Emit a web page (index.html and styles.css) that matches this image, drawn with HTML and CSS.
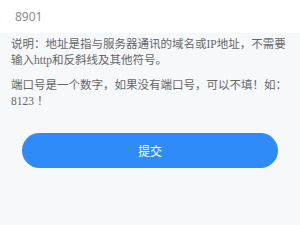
FILE: index.html
```html
<!DOCTYPE html>
<html lang="zh-CN">
<head>
  <meta charset="UTF-8">
  <meta name="viewport" content="width=device-width, initial-scale=1.0">
  <title>服务器设置</title>
  <link rel="stylesheet" href="styles.css">
</head>
<body>
  <div class="field">
    <input class="port-input" type="text" value="8901">
  </div>
  <div class="tips">
    <p>说明：地址是指与服务器通讯的域名或IP地址，不需要输入http和反斜线及其他符号。</p>
    <p>端口号是一个数字，如果没有端口号，可以不填<span class="cjk">！</span>如：8123<span class="cjk last">！</span></p>
  </div>
  <div class="actions">
    <button class="submit-btn">提交</button>
  </div>
</body>
</html>
```

FILE: styles.css
```css
*{
  margin:0;
  padding:0;
  box-sizing: border-box;
}
body{
  background-color:#f7f8fa;
  font-family: "Liberation Serif", "Noto Sans CJK SC", serif;
}
.field{
  background-color:#fff;
  height:33px;
  padding:0 15px;
  display:flex;
  align-items:center;
}
.port-input{
  border:none;
  outline:none;
  width:100%;
  font-family: "Noto Sans", "Noto Sans CJK SC", sans-serif;
  font-size:12px;
  color:#8a8a8a;
  background:transparent;
}
.tips{
  padding:3px 10px 0 11px;
  color:#666;
  font-size:11.5px;
  line-height:16px;
  text-spacing-trim: space-all;
}
.tips p{
  margin-bottom:9px;
}
.cjk{
  font-family: "Noto Sans CJK SC", sans-serif;
  line-height:1;
}
.last{
  margin-left:3px;
}
.actions{
  padding:15px 22px;
}
.submit-btn{
  width:100%;
  height:35px;
  border:none;
  border-radius:18px;
  background-color:#2f8bf7;
  color:#fff;
  font-family: "Noto Sans CJK SC", sans-serif;
  font-size:12px;
}
```
